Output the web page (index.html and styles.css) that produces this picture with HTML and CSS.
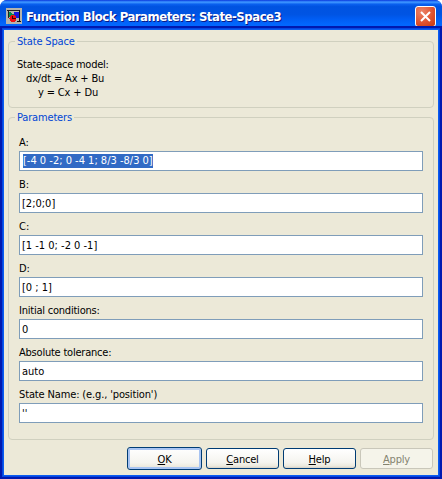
FILE: index.html
```html
<!DOCTYPE html>
<html lang="en">
<head>
<meta charset="utf-8">
<title>Function Block Parameters: State-Space3</title>
<link rel="stylesheet" href="styles.css">
</head>
<body>
<main class="window">
  <header class="titlebar">
    <svg class="app-icon" width="16" height="16" viewBox="0 0 16 16" shape-rendering="crispEdges">
      <rect width="16" height="16" fill="#b5b3ad"/>
      <path d="M2 3L8 6.500L2 10Z" fill="#009050"/>
      <path d="M1 2.500h12M2.500 2v8" stroke="#222" fill="none"/>
      <rect x="8" y="4" width="5" height="6" fill="#1818e0"/>
      <path d="M13.500 2v12M11 13.500h4" stroke="#111"/>
      <circle cx="7" cy="10.500" r="3.500" fill="#f01010"/>
      <path d="M6.500 8v2.500h3" stroke="#400" fill="none"/>
    </svg>
    <h1 class="title">Function Block Parameters: State-Space3</h1>
    <button class="close" aria-label="Close"><svg width="11" height="11" viewBox="0 0 11 11"><path d="M1 1L10 10M10 1L1 10" stroke="#fff" stroke-width="2"/></svg></button>
  </header>
  <div class="client">
    <section class="group about">
      <h2 class="legend">State Space</h2>
      <p class="m1">State-space model:</p>
      <p class="m2">dx/dt = Ax + Bu</p>
      <p class="m3">y = Cx + Du</p>
    </section>
    <section class="group params">
      <h2 class="legend">Parameters</h2>
      <div class="field"><span class="label">A:</span><div class="box"><span class="selected">[-4 0 -2; 0 -4 1; 8/3 -8/3 0]</span></div></div>
      <div class="field"><span class="label">B:</span><div class="box">[2;0;0]</div></div>
      <div class="field"><span class="label">C:</span><div class="box">[1 -1 0; -2 0 -1]</div></div>
      <div class="field"><span class="label">D:</span><div class="box">[0 ; 1]</div></div>
      <div class="field"><span class="label tight">Initial conditions:</span><div class="box">0</div></div>
      <div class="field"><span class="label tight">Absolute tolerance:</span><div class="box">auto</div></div>
      <div class="field"><span class="label name">State Name: (e.g., 'position')</span><div class="box">''</div></div>
    </section>
    <footer class="buttons">
      <button class="btn default"><span><u>O</u>K</span></button>
      <button class="btn"><span><u>C</u>ancel</span></button>
      <button class="btn"><span><u>H</u>elp</span></button>
      <button class="btn disabled" disabled><span><u>A</u>pply</span></button>
    </footer>
  </div>
</main>
</body>
</html>
```
FILE: styles.css
```css
* { box-sizing: border-box; }
body { margin: 0; background: #fff; font: 11px/13px "DejaVu Sans Condensed", "DejaVu Sans", sans-serif; font-stretch: condensed; color: #000; }
h1, h2, p { margin: 0; font-size: inherit; font-weight: normal; }
span, p, h2 { white-space: pre; }
.window { width: 442px; height: 479px; display: flex; flex-direction: column; overflow: hidden; border-radius: 7px 7px 0 0; background: #0831d9; }
.titlebar { height: 30px; flex: none; display: flex; align-items: center; padding: 3px 6px 0; background: linear-gradient(#0831d9 0, #2b78f7 4%, #3a92ff 8%, #0a60ef 14%, #0053e1 22%, #0054e3 48%, #005cf2 62%, #0268ff 84%, #0060f0 91%, #0041c4 96%, #002da8 100%); }
.app-icon { flex: none; margin-top: -1px; }
.title { margin-left: 4px; flex: 1; color: #fff; font: bold 13px/18px "DejaVu Sans Condensed", "DejaVu Sans", sans-serif; font-stretch: condensed; letter-spacing: -.47px; white-space: nowrap; text-shadow: 1px 1px 0 #0a1883; }
.close { width: 21px; height: 21px; padding: 0; display: flex; align-items: center; justify-content: center; border: 1px solid #fff; border-radius: 3px; background: radial-gradient(circle at 30% 25%, #ec8468, #e0502c 60%, #c63a10); }
.client { flex: 1; margin: 0 4px 4px; padding: 11px 4px 0; background: #ece9d8; box-shadow: 0 0 0 1px #0a5cf0, 0 0 0 2px #0546e0, 0 0 0 4px #0019b0; }
.group { border: 1px solid #d0d0bf; border-radius: 4px; width: 426px; }
.legend { width: max-content; height: 13px; margin: -7px 0 0 6px; padding: 0 2px; background: #ece9d8; color: #0046d5; letter-spacing: -.17px; }
.about { height: 67px; }
.about p { height: 14px; line-height: 14px; margin-left: 8px; letter-spacing: -.15px; }
.about .m1 { margin-top: 10px; letter-spacing: -.25px; }
.about .m2 { margin-left: 17px; }
.about .m3 { margin-left: 29px; }
.params { height: 323px; margin-top: 9px; }
.params .legend { margin-bottom: 12px; }
.field { height: 42px; padding: 0 10px; }
.label { display: block; height: 15px; line-height: 13px; width: max-content; }
.tight { letter-spacing: -.22px; }
.name { letter-spacing: -.14px; }
.box { height: 20px; display: flex; align-items: center; padding: 0 2px; border: 1px solid #7f9db9; background: #fff; white-space: pre; }
.selected { height: 14px; line-height: 14px; margin-left: 1px; background: #316ac5; color: #fff; }
.buttons { display: flex; justify-content: flex-end; gap: 4px; margin: 7px 1px 0 0; align-items: center; }
.btn { width: 73px; height: 21px; padding: 2px 0 0; border: 1px solid #003c74; border-radius: 3px; font: inherit; letter-spacing: -.2px; color: #000; background: linear-gradient(#fff, #f5f4ef 70%, #ece9dd 90%, #d6d0c5); }
.default { width: 75px; height: 23px; box-shadow: inset 0 0 0 2px #a8c4f2; }
.disabled { color: #84836f; border-color: #c9c7ba; background: #f5f4ea; }
```
